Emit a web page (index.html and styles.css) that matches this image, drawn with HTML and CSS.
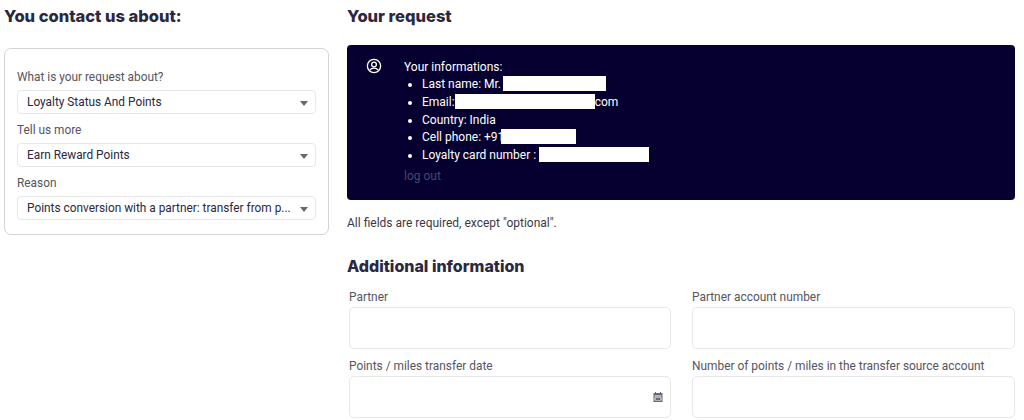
FILE: index.html
```html
<!DOCTYPE html>
<html lang="en">
<head>
    <meta charset="UTF-8">
    <meta name="viewport" content="width=device-width, initial-scale=1.0">
    <title>Contact us</title>
    <link rel="stylesheet" href="styles.css">
</head>
<body>
    <div class="page">
        <aside class="side">
            <h2 class="title">You contact us about:</h2>
            <div class="topic-card">
                <label class="label">What is your request about?</label>
                <div class="select">
                    <span class="select-text">Loyalty Status And Points</span>
                    <span class="caret"></span>
                </div>
                <label class="label">Tell us more</label>
                <div class="select">
                    <span class="select-text">Earn Reward Points</span>
                    <span class="caret"></span>
                </div>
                <label class="label">Reason</label>
                <div class="select">
                    <span class="select-text">Points conversion with a partner: transfer from p...</span>
                    <span class="caret"></span>
                </div>
            </div>
        </aside>
        <main class="main">
            <h2 class="title">Your request</h2>
            <div class="account">
                <svg class="account-icon" width="16" height="16" viewBox="0 0 16 16" fill="none" stroke="#fff" stroke-width="1.3">
                    <circle cx="8" cy="8" r="6.6"/>
                    <circle cx="8" cy="6.500" r="2.400"/>
                    <path d="M3.800 12.200c1-1.500 2.500-2 4.200-2s3.200.5 4.200 2"/>
                </svg>
                <div class="account-info">
                    <div class="info-head">Your informations:</div>
                    <ul class="info-list">
                        <li>Last name: Mr. <span class="mask mask-name"></span></li>
                        <li>Email:<span class="mask mask-email"></span>com</li>
                        <li>Country: India</li>
                        <li>Cell phone: +91<span class="mask mask-phone"></span></li>
                        <li>Loyalty card number : <span class="mask mask-card"></span></li>
                    </ul>
                    <a class="logout" href="#">log out</a>
                </div>
            </div>
            <p class="note">All fields are required, except "optional".</p>
            <h3 class="subtitle">Additional information</h3>
            <div class="fields">
                <div class="field">
                    <label class="field-label">Partner</label>
                    <div class="input"></div>
                </div>
                <div class="field">
                    <label class="field-label">Partner account number</label>
                    <div class="input"></div>
                </div>
                <div class="field">
                    <label class="field-label">Points / miles transfer date</label>
                    <div class="input input-date">
                        <svg width="10" height="10" viewBox="0 0 10 10" fill="#6b6772">
                            <path d="M2 0h1v1h4V0h1v1h1.500v9H.5V1H2zM1.500 3.500v1h7v-1zm0 2v3h7v-3z"/>
                            <path d="M2.500 6h5v2h-5z"/>
                        </svg>
                    </div>
                </div>
                <div class="field">
                    <label class="field-label">Number of points / miles in the transfer source account</label>
                    <div class="input"></div>
                </div>
            </div>
        </main>
    </div>
</body>
</html>
```

FILE: styles.css
```css
* {
    box-sizing: border-box;
}
html, body {
    height: 100%;
}
body {
    margin: 0;
    background-color: #fff;
    color: #2b2840;
    font-family: Roboto, "Liberation Sans", sans-serif;
    font-size: 12px;
    overflow: hidden;
}
.page {
    display: flex;
    gap: 18px;
    padding: 0 9px 0 4px;
}
.side {
    width: 325px;
    flex-shrink: 0;
}
.main {
    flex: 1;
}
.title {
    margin: 0;
    padding-top: 7px;
    height: 45px;
    font-family: Inter, "Open Sans", sans-serif;
    font-size: 16.500px;
    font-weight: 800;
    line-height: 18px;
    color: #2b2840;
}
.topic-card {
    margin-top: 3px;
    padding: 16px 12px 14px 12px;
    border: 1px solid #d5d4d9;
    border-radius: 7px;
}
.label {
    display: block;
    height: 25px;
    padding-top: 3px;
    font-size: 11.850px;
    line-height: 18px;
    color: #57545f;
}
.select {
    display: flex;
    align-items: center;
    justify-content: space-between;
    height: 24px;
    margin-bottom: 4px;
    padding: 0 7px 0 9px;
    border: 1px solid #e8e7ea;
    border-radius: 4px;
}
.topic-card .select:last-child {
    margin-bottom: 0;
}
.select-text {
    flex: 1;
    white-space: nowrap;
    font-size: 11.850px;
}
.caret {
    width: 0;
    height: 0;
    margin-top: 2px;
    border-left: 4px solid transparent;
    border-right: 4px solid transparent;
    border-top: 5px solid #6b6772;
}
.account {
    display: flex;
    height: 155px;
    padding: 13px 12px 0 19px;
    background-color: #05002f;
    border-radius: 4px;
    color: #fff;
}
.account-icon {
    flex-shrink: 0;
    margin: 0 22px 0 0;
}
.account-info {
    line-height: 18px;
}
.info-head {
    height: 17px;
}
.info-list {
    margin: 0;
    padding-left: 18px;
}
.info-list li {
    height: 17.800px;
}
.mask {
    display: inline-block;
    height: 15px;
    background-color: #fff;
    vertical-align: -3px;
}
.mask-name {
    width: 103px;
    margin-left: -1px;
}
.mask-email {
    width: 140px;
}
.mask-phone {
    width: 75px;
    margin-left: -3px;
}
.mask-card {
    width: 110px;
}
.logout {
    display: block;
    margin-top: 3px;
    color: #4a4868;
    text-decoration: none;
}
.note {
    margin: 15px 0 0;
    line-height: 16px;
    color: #3b3848;
}
.subtitle {
    margin: 26px 0 0;
    font-family: Inter, "Open Sans", sans-serif;
    font-size: 16px;
    font-weight: 800;
    line-height: 18px;
    color: #2b2840;
}
.fields {
    display: grid;
    grid-template-columns: 322px 323px;
    column-gap: 21px;
    row-gap: 7px;
    margin-top: 12px;
    padding-left: 2px;
}
.field-label {
    display: block;
    height: 20px;
    font-size: 11.900px;
    line-height: 20px;
    color: #57545f;
}
.input {
    display: flex;
    align-items: center;
    justify-content: flex-end;
    height: 42px;
    padding-right: 7px;
    border: 1px solid #e8e7ea;
    border-radius: 5px;
}
```
